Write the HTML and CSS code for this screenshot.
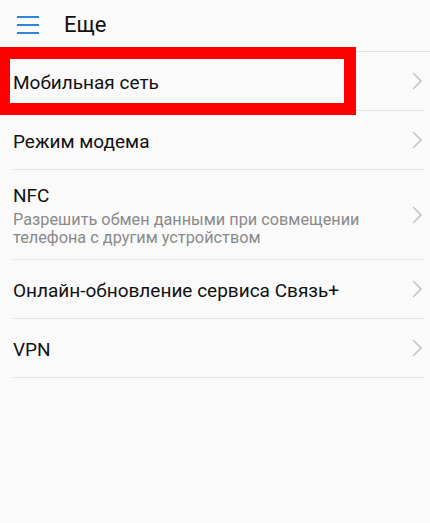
FILE: index.html
```html
<!DOCTYPE html>
<html lang="ru">
<head>
<meta charset="utf-8">
<link rel="stylesheet" href="styles.css">
</head>
<body>
<div class="screen">
  <header class="topbar">
    <svg class="menu" width="24" height="20" viewBox="0 0 24 20">
      <path d="M1 3h22M1 11h22M1 19h22" stroke="#2a87e0" stroke-width="2.2" fill="none"/>
    </svg>
    <h1 class="title">Еще</h1>
  </header>
  <ul class="list">
    <li class="item">
      <div class="text"><div class="label">Мобильная сеть</div></div>
      <svg class="chev" width="10" height="18" viewBox="0 0 10 18"><path d="M1 1l8 8-8 8" stroke="#c4c4c4" stroke-width="1.6" fill="none"/></svg>
    </li>
    <li class="item">
      <div class="text"><div class="label">Режим модема</div></div>
      <svg class="chev" width="10" height="18" viewBox="0 0 10 18"><path d="M1 1l8 8-8 8" stroke="#c4c4c4" stroke-width="1.6" fill="none"/></svg>
    </li>
    <li class="item tall">
      <div class="text">
        <div class="label">NFC</div>
        <div class="sub">Разрешить обмен данными при совмещении телефона с другим устройством</div>
      </div>
      <svg class="chev" width="10" height="18" viewBox="0 0 10 18"><path d="M1 1l8 8-8 8" stroke="#c4c4c4" stroke-width="1.6" fill="none"/></svg>
    </li>
    <li class="item">
      <div class="text"><div class="label">Онлайн-обновление сервиса Связь+</div></div>
      <svg class="chev" width="10" height="18" viewBox="0 0 10 18"><path d="M1 1l8 8-8 8" stroke="#c4c4c4" stroke-width="1.6" fill="none"/></svg>
    </li>
    <li class="item">
      <div class="text"><div class="label">VPN</div></div>
      <svg class="chev" width="10" height="18" viewBox="0 0 10 18"><path d="M1 1l8 8-8 8" stroke="#c4c4c4" stroke-width="1.6" fill="none"/></svg>
    </li>
  </ul>
  <div class="highlight"></div>
</div>
</body>
</html>
```
FILE: styles.css
```css
html, body {
  margin: 0;
  padding: 0;
  background: #fafafa;
}
body {
  font-family: Roboto, "Noto Sans", sans-serif;
  color: #111;
  width: 430px;
  height: 523px;
  overflow: hidden;
}
.screen {
  position: relative;
  width: 430px;
  height: 523px;
}
.topbar {
  height: 51px;
  border-bottom: 1px solid #e2e2e2;
  display: flex;
  align-items: center;
  box-sizing: content-box;
}
.menu {
  margin-left: 16px;
  margin-top: -3px;
}
.title {
  margin: 0 0 0 24px;
  margin-top: -3px;
  font-size: 22px;
  font-weight: 400;
  color: #111;
}
.list {
  list-style: none;
  margin: 0;
  padding: 0 6px 0 13px;
}
.item {
  height: 58px;
  border-bottom: 1px solid #e4e4e4;
  display: flex;
  align-items: center;
  justify-content: space-between;
}
.item.tall {
  height: 89px;
}
.text {
  padding-top: 3px;
}
.label {
  font-size: 19px;
  line-height: 22px;
}
.sub {
  font-size: 16.3px;
  line-height: 18px;
  color: #8a8a8a;
  width: 370px;
  margin-top: 4px;
}
.chev {
  margin-right: 2px;
  flex: none;
}
.highlight {
  position: absolute;
  left: 0;
  top: 47px;
  width: 356px;
  height: 68px;
  box-sizing: border-box;
  border: solid #ff0000;
  border-width: 12px 12px 12px 10px;
}
```
